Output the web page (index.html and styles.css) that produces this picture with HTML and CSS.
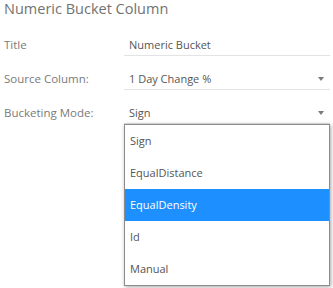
FILE: index.html
```html
<!DOCTYPE html>
<html>
<head>
<meta charset="utf-8">
<link rel="stylesheet" href="styles.css">
</head>
<body>
<div class="panel">
  <h1 class="heading">Numeric Bucket Column</h1>
  <div class="form">
    <div class="row">
      <div class="label">Title</div>
      <div class="field">Numeric Bucket</div>
    </div>
    <div class="row">
      <div class="label">Source Column:</div>
      <div class="field select"><span>1 Day Change %</span><i class="caret"></i></div>
    </div>
    <div class="row">
      <div class="label">Bucketing Mode:</div>
      <div class="field select"><span>Sign</span><i class="caret"></i></div>
    </div>
  </div>
  <ul class="menu">
    <li class="item">Sign</li>
    <li class="item">EqualDistance</li>
    <li class="item active">EqualDensity</li>
    <li class="item">Id</li>
    <li class="item">Manual</li>
  </ul>
</div>
</body>
</html>
```
FILE: styles.css
```css
html, body {
  margin: 0;
  padding: 0;
  background: #ffffff;
}
body {
  font-family: "Open Sans", "Noto Sans", sans-serif;
  width: 333px;
  height: 288px;
  overflow: hidden;
}
.panel {
  position: relative;
  padding: 0 3px 0 4px;
}
.heading {
  margin: 0;
  height: 22px;
  font-size: 14.5px;
  line-height: 18px;
  font-weight: 400;
  color: #727272;
}
.form {
  display: flex;
  flex-direction: column;
}
.row {
  display: grid;
  grid-template-columns: 120px 1fr;
  height: 34px;
}
.label {
  padding-top: 13px;
  line-height: 20px;
  font-size: 11.5px;
  color: #7a7a7a;
}
.field {
  padding: 13px 0 0 5px;
  height: 20px;
  line-height: 20px;
  font-size: 11px;
  color: #555555;
  border-bottom: 1px solid #e3e3e3;
}
.select {
  display: flex;
  justify-content: space-between;
  align-items: center;
  padding-right: 6px;
}
.caret {
  width: 0;
  height: 0;
  border-left: 3.5px solid transparent;
  border-right: 3.5px solid transparent;
  border-top: 4px solid #7a7a7a;
  margin-top: -1px;
}
.menu {
  position: absolute;
  top: 124px;
  left: 124px;
  width: 204px;
  margin: 0;
  padding: 0;
  list-style: none;
  background: #ffffff;
  border: 1px solid #8c8c8c;
  box-shadow: 1px 1px 4px rgba(0, 0, 0, 0.35);
}
.item {
  height: 32px;
  line-height: 32px;
  padding-left: 5px;
  font-size: 11px;
  color: #555555;
}
.item.active {
  background: #1e8fff;
  color: #ffffff;
}
```
